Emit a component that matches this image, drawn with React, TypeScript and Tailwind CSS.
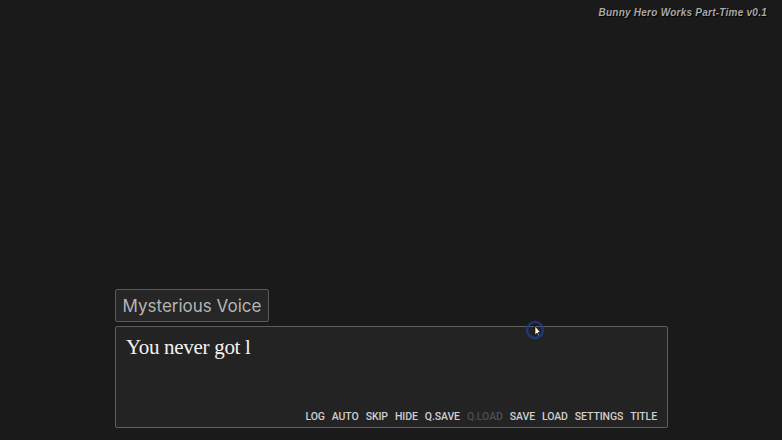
import React from "react";

const menu = ["LOG", "AUTO", "SKIP", "HIDE", "Q.SAVE", "Q.LOAD", "SAVE", "LOAD", "SETTINGS", "TITLE"];

export default function App() {
  return (
    <div className="relative flex h-[440px] w-[782px] flex-col overflow-hidden bg-[#1a1a1a]">
      {/* version tag */}
      <div className="flex justify-end pr-[15px] pt-[5px]">
        <span
          className="text-[10px] font-bold italic tracking-[0.25px] text-[#a8a8a8]"
          style={{ fontFamily: "'Liberation Sans', Arial, sans-serif", textShadow: "1px 1px 1px #000" }}
        >
          Bunny Hero Works Part-Time v0.1
        </span>
      </div>

      <div className="flex-1" />

      {/* dialogue */}
      <div className="mb-[12px] ml-[115px] flex w-[553px] flex-col gap-[4px]">
        <div className="flex h-[33px] w-[154px] items-center justify-center rounded-[2px] border border-[#5a5a5a] bg-[#262626]">
          <span
            className="pt-[2px] text-[17px] text-[#b5b5b5]"
            style={{ fontFamily: "Inter, 'Noto Sans', sans-serif" }}
          >
            Mysterious Voice
          </span>
        </div>
        <div className="flex h-[102px] flex-col rounded-[2px] border border-[#5e5e5e] bg-[#232323] px-[10px]">
          <p
            className="pt-[6px] text-[21px] leading-[28px] tracking-[-0.3px] text-[#f2f2f2]"
            style={{ fontFamily: "'Liberation Serif', 'Times New Roman', serif" }}
          >
            You never got l
          </p>
          <div className="flex-1" />
          <div className="flex justify-end gap-[7px] pb-[2px] pr-[-1px]">
            {menu.map((m) => (
              <span
                key={m}
                className={`text-[10.5px] font-medium tracking-[-0.1px] ${m === "Q.LOAD" ? "text-[#4e4e4e]" : "text-[#cfcfcf]"}`}
                style={{ fontFamily: "Roboto, 'Noto Sans', sans-serif" }}
              >
                {m}
              </span>
            ))}
          </div>
        </div>
      </div>

      {/* cursor overlay */}
      <svg className="absolute left-[524px] top-[319px]" width="24" height="24" viewBox="0 0 24 24">
        <circle cx="11" cy="11" r="8" fill="none" stroke="#1d3a8a" strokeWidth="2.5" opacity="0.85" />
        <path d="M11 7 L11 16 L13 14 L14.5 17 L15.5 16.5 L14 13.5 L16.5 13.5 Z" fill="#ffffff" stroke="#000" strokeWidth="0.6" />
      </svg>
    </div>
  );
}
